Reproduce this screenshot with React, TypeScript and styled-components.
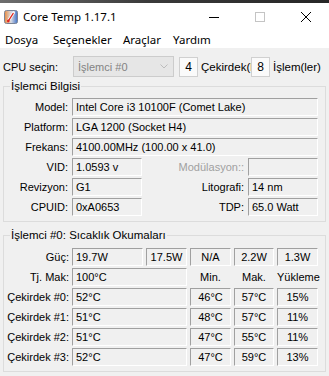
import styled, { createGlobalStyle } from "styled-components";

const GlobalStyle = createGlobalStyle`
  html, body {
    margin: 0;
    padding: 0;
    background: #f0f0f0;
  }
  body {
    font-family: "Liberation Sans", Arial, sans-serif;
    font-size: 11px;
    color: #000;
  }
`;

const Window = styled.div`
  width: 329px;
  height: 376px;
  overflow: hidden;
  background: #f0f0f0;
  display: flex;
  flex-direction: column;
`;

const DesktopEdge = styled.div`
  height: 3px;
  background: linear-gradient(90deg, #6e6e6e, #3a3a3a 45%, #262626);
`;

const TitleBar = styled.div`
  height: 27px;
  background: #fff;
  display: flex;
  align-items: center;
`;

const AppIcon = styled.svg`
  flex: none;
  margin: 0 5px 0 4px;
`;

const Title = styled.span`
  flex: 1;
  font-family: "Noto Sans", "Open Sans", sans-serif;
  font-size: 11.5px;
  color: #000;
`;

const WinButton = styled.div`
  width: 46px;
  height: 27px;
  display: flex;
  align-items: center;
  justify-content: center;
`;

const MenuBar = styled.div`
  height: 18px;
  background: #fff;
  display: flex;
  align-items: center;
  padding-left: 5px;
  font-family: "Noto Sans", "Open Sans", sans-serif;
  font-size: 11.5px;
`;

const MenuItem = styled.span<{ $width?: number }>`
  width: ${(p) => (p.$width ? `${p.$width}px` : "auto")};
  white-space: nowrap;
  color: #000;
`;

const Body = styled.div`
  padding: 8px 3px 0 3px;
  display: flex;
  flex-direction: column;
`;

const CpuRow = styled.div`
  display: flex;
  align-items: center;
  height: 21px;
`;

const CpuLabel = styled.span`
  width: 70px;
  flex: none;
`;

const Select = styled.div`
  box-sizing: border-box;
  width: 101px;
  height: 21px;
  border: 1px solid #cccccc;
  background: #e6e6e6;
  color: #838383;
  display: flex;
  align-items: center;
  justify-content: space-between;
  padding: 0 5px 0 4px;
  margin-right: 5px;
`;

const CountBox = styled.div`
  box-sizing: border-box;
  width: 19px;
  height: 20px;
  border: 1px solid #d0d0d0;
  background: #fafafa;
  display: flex;
  align-items: center;
  justify-content: center;
  font-size: 12px;
`;

const CountLabel = styled.span<{ $width: number }>`
  width: ${(p) => p.$width}px;
  margin-left: 3px;
  white-space: nowrap;
  overflow: hidden;
  font-size: 11.5px;
`;

const Group = styled.fieldset<{ $top: number; $padTop: number }>`
  margin: ${(p) => p.$top}px 0 0 0;
  padding: ${(p) => p.$padTop}px 0 5px 0;
  border: 1px solid #dcdcdc;
  min-width: 0;
`;

const Legend = styled.legend`
  margin-left: 6px;
  padding: 0 1px;
  font-size: 11.5px;
  line-height: 13px;
`;

const InfoGrid = styled.div`
  display: grid;
  grid-template-columns: 64px 70px 98px 70px;
  grid-auto-rows: 18px;
  column-gap: 4px;
  row-gap: 2px;
`;

const TempGrid = styled.div`
  display: grid;
  grid-template-columns: 65px 71px 41px 41px 40px 41px;
  grid-auto-rows: 18px;
  column-gap: 3px;
  row-gap: 2px;
`;

const Label = styled.span<{ $disabled?: boolean }>`
  text-align: right;
  line-height: 18px;
  white-space: nowrap;
  color: ${(p) => (p.$disabled ? "#a0a0a0" : "#000")};
`;

const Field = styled.div<{ $span?: number; $center?: boolean }>`
  grid-column: span ${(p) => p.$span ?? 1};
  box-sizing: border-box;
  height: 18px;
  border: 1px solid;
  border-color: #a0a0a0 #ffffff #ffffff #a0a0a0;
  padding: 0 3px;
  line-height: 16px;
  white-space: nowrap;
  overflow: hidden;
  text-align: ${(p) => (p.$center ? "center" : "left")};
`;

const HeadCell = styled.span`
  text-align: center;
  line-height: 18px;
`;

const cores = [
  { name: "Çekirdek #0:", temp: "52°C", min: "46°C", max: "57°C", load: "15%" },
  { name: "Çekirdek #1:", temp: "51°C", min: "48°C", max: "57°C", load: "11%" },
  { name: "Çekirdek #2:", temp: "51°C", min: "47°C", max: "55°C", load: "11%" },
  { name: "Çekirdek #3:", temp: "52°C", min: "47°C", max: "59°C", load: "13%" },
];

const power = ["17.5W", "N/A", "2.2W", "1.3W"];

export default function App() {
  return (
    <Window>
      <GlobalStyle />
      <DesktopEdge />
      <TitleBar>
        <AppIcon width="14" height="14" viewBox="0 0 14 14">
          <defs>
            <linearGradient id="ctg" x1="0" x2="1" y1="0" y2="0">
              <stop offset="0" stopColor="#e98a3e" />
              <stop offset="0.5" stopColor="#d9dce4" />
              <stop offset="1" stopColor="#3f70c6" />
            </linearGradient>
          </defs>
          <rect x="0.5" y="0.5" width="13" height="13" rx="2" fill="url(#ctg)" stroke="#7a8496" />
          <path d="M9.6 2.6 L4.4 10.8" stroke="#f6f6f6" strokeWidth="3" strokeLinecap="round" />
          <path d="M9.2 3.4 L4.4 10.8" stroke="#e0261c" strokeWidth="1.2" strokeLinecap="round" />
          <circle cx="4.3" cy="11" r="1.4" fill="#e0261c" />
        </AppIcon>
        <Title>Core Temp 1.17.1</Title>
        <WinButton>
          <svg width="10" height="10" viewBox="0 0 10 10">
            <path d="M0 5.5 H10" stroke="#000" strokeWidth="1" />
          </svg>
        </WinButton>
        <WinButton>
          <svg width="10" height="10" viewBox="0 0 10 10">
            <rect x="0.5" y="0.5" width="9" height="9" fill="none" stroke="#c4c4c4" />
          </svg>
        </WinButton>
        <WinButton>
          <svg width="10" height="10" viewBox="0 0 10 10">
            <path d="M0 0 L10 10 M10 0 L0 10" stroke="#000" strokeWidth="1" />
          </svg>
        </WinButton>
      </TitleBar>
      <MenuBar>
        <MenuItem $width={48}>Dosya</MenuItem>
        <MenuItem $width={70}>Seçenekler</MenuItem>
        <MenuItem $width={50}>Araçlar</MenuItem>
        <MenuItem>Yardım</MenuItem>
      </MenuBar>
      <Body>
        <CpuRow>
          <CpuLabel>CPU seçin:</CpuLabel>
          <Select>
            <span>İşlemci #0</span>
            <svg width="8" height="5" viewBox="0 0 8 5">
              <path d="M0.5 0.5 L4 4 L7.5 0.5" fill="none" stroke="#bcbcbc" />
            </svg>
          </Select>
          <CountBox>4</CountBox>
          <CountLabel $width={50}>Çekirdek(ler)</CountLabel>
          <CountBox>8</CountBox>
          <CountLabel $width={50}>İşlem(ler)</CountLabel>
        </CpuRow>

        <Group $top={3} $padTop={5}>
          <Legend>İşlemci Bilgisi</Legend>
          <InfoGrid>
            <Label>Model:</Label>
            <Field $span={3}>Intel Core i3 10100F (Comet Lake)</Field>
            <Label>Platform:</Label>
            <Field $span={3}>LGA 1200 (Socket H4)</Field>
            <Label>Frekans:</Label>
            <Field $span={3}>4100.00MHz (100.00 x 41.0)</Field>
            <Label>VID:</Label>
            <Field>1.0593 v</Field>
            <Label $disabled>Modülasyon::</Label>
            <Field />
            <Label>Revizyon:</Label>
            <Field>G1</Field>
            <Label>Litografi:</Label>
            <Field>14 nm</Field>
            <Label>CPUID:</Label>
            <Field>0xA0653</Field>
            <Label>TDP:</Label>
            <Field>65.0 Watt</Field>
          </InfoGrid>
        </Group>

        <Group $top={7} $padTop={6}>
          <Legend>İşlemci #0: Sıcaklık Okumaları</Legend>
          <TempGrid>
            <Label>Güç:</Label>
            <Field>19.7W</Field>
            {power.map((p) => (
              <Field key={p} $center>
                {p}
              </Field>
            ))}
            <Label>Tj. Mak:</Label>
            <Field $span={2}>100°C</Field>
            <HeadCell>Min.</HeadCell>
            <HeadCell>Mak.</HeadCell>
            <HeadCell>Yükleme</HeadCell>
            {cores.map((c) => (
              <>
                <Label key={c.name}>{c.name}</Label>
                <Field $span={2}>{c.temp}</Field>
                <Field $center>{c.min}</Field>
                <Field $center>{c.max}</Field>
                <Field $center>{c.load}</Field>
              </>
            ))}
          </TempGrid>
        </Group>
      </Body>
    </Window>
  );
}
